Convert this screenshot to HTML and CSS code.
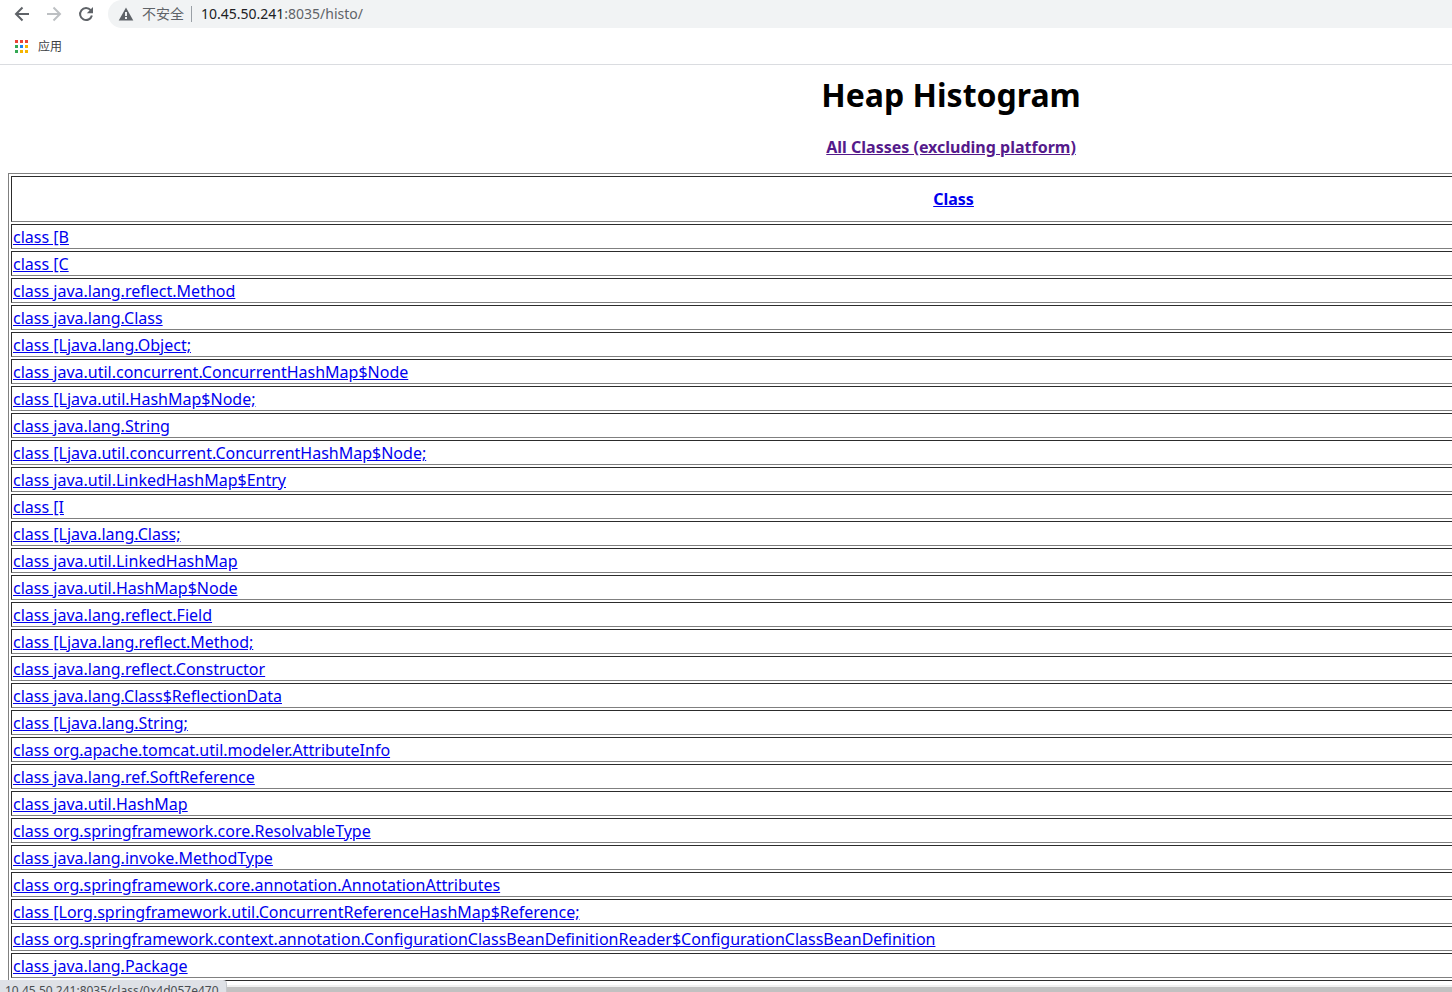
FILE: index.html
```html
<!DOCTYPE html>
<html lang="zh-CN">
<head>
  <meta charset="UTF-8">
  <title>Heap Histogram</title>
  <link rel="stylesheet" href="styles.css">
</head>
<body>

  <!-- Toolbar -->
  <header class="browser">
    <div class="toolbar">
      <button class="nav-btn" aria-label="Back">
        <svg width="16" height="16" viewBox="0 0 16 16"><path d="M15 8H2M8.500 1.500L2 8l6.500 6.500" fill="none" stroke="#5f6368" stroke-width="2"/></svg>
      </button>
      <button class="nav-btn" aria-label="Forward" disabled>
        <svg width="16" height="16" viewBox="0 0 16 16"><path d="M1 8h13M7.500 1.500L14 8l-6.500 6.500" fill="none" stroke="#bdc0c3" stroke-width="2"/></svg>
      </button>
      <button class="nav-btn" aria-label="Reload">
        <svg width="16" height="16" viewBox="0 0 16 16"><path d="M12.700 4.200A6 6 0 1 0 13.900 9.600" fill="none" stroke="#5f6368" stroke-width="2"/><path d="M15 1v6.200H8.800z" fill="#5f6368"/></svg>
      </button>
      <div class="address">
        <svg width="16" height="14" viewBox="0 0 16 14"><path d="M8 0.500L15.300 13.500H0.700z" fill="#5f6368"/><path d="M7 5h2v4H7zM7 10h2v2H7z" fill="#f1f3f4"/></svg>
        <span class="insecure">不安全</span>
        <span class="url"><b>10.45.50.241</b>:8035/histo/</span>
      </div>
    </div>
    <nav class="bookmarks">
      <a href="#">
        <svg width="13" height="13" viewBox="0 0 13 13">
          <path d="M0 0h3v3H0zM5 0h3v3H5zM10 0h3v3h-3z" fill="#ea4335"/>
          <path d="M0 5h3v3H0zM0 10h3v3H0z" fill="#34a853"/>
          <path d="M5 5h3v3H5z" fill="#1a84f0"/>
          <path d="M10 5h3v3h-3zM5 10h3v3H5zM10 10h3v3h-3z" fill="#f5b400"/>
        </svg>
        <span>应用</span>
      </a>
    </nav>
  </header>

  <!-- Page -->
  <main class="viewport">
    <div class="page">
      <h1>Heap Histogram</h1>
      <p class="filter"><a class="visited" href="#">All Classes (excluding platform)</a></p>
      <table>
        <thead>
          <tr><th><a href="#">Class</a></th></tr>
        </thead>
        <tbody>
          <tr><td><a href="#">class [B</a></td></tr>
          <tr><td><a href="#">class [C</a></td></tr>
          <tr><td><a href="#">class java.lang.reflect.Method</a></td></tr>
          <tr><td><a href="#">class java.lang.Class</a></td></tr>
          <tr><td><a href="#">class [Ljava.lang.Object;</a></td></tr>
          <tr><td><a href="#">class java.util.concurrent.ConcurrentHashMap$Node</a></td></tr>
          <tr><td><a href="#">class [Ljava.util.HashMap$Node;</a></td></tr>
          <tr><td><a href="#">class java.lang.String</a></td></tr>
          <tr><td><a href="#">class [Ljava.util.concurrent.ConcurrentHashMap$Node;</a></td></tr>
          <tr><td><a href="#">class java.util.LinkedHashMap$Entry</a></td></tr>
          <tr><td><a href="#">class [I</a></td></tr>
          <tr><td><a href="#">class [Ljava.lang.Class;</a></td></tr>
          <tr><td><a href="#">class java.util.LinkedHashMap</a></td></tr>
          <tr><td><a href="#">class java.util.HashMap$Node</a></td></tr>
          <tr><td><a href="#">class java.lang.reflect.Field</a></td></tr>
          <tr><td><a href="#">class [Ljava.lang.reflect.Method;</a></td></tr>
          <tr><td><a href="#">class java.lang.reflect.Constructor</a></td></tr>
          <tr><td><a href="#">class java.lang.Class$ReflectionData</a></td></tr>
          <tr><td><a href="#">class [Ljava.lang.String;</a></td></tr>
          <tr><td><a href="#">class org.apache.tomcat.util.modeler.AttributeInfo</a></td></tr>
          <tr><td><a href="#">class java.lang.ref.SoftReference</a></td></tr>
          <tr><td><a href="#">class java.util.HashMap</a></td></tr>
          <tr><td><a href="#">class org.springframework.core.ResolvableType</a></td></tr>
          <tr><td><a href="#">class java.lang.invoke.MethodType</a></td></tr>
          <tr><td><a href="#">class org.springframework.core.annotation.AnnotationAttributes</a></td></tr>
          <tr><td><a href="#">class [Lorg.springframework.util.ConcurrentReferenceHashMap$Reference;</a></td></tr>
          <tr><td><a href="#">class org.springframework.context.annotation.ConfigurationClassBeanDefinitionReader$ConfigurationClassBeanDefinition</a></td></tr>
          <tr><td><a href="#">class java.lang.Package</a></td></tr>
          <tr><td></td></tr>
        </tbody>
      </table>
    </div>
  </main>

  <div class="scrollbar"></div>
  <div class="status">10.45.50.241:8035/class/0x4d057e470</div>

</body>
</html>
```
FILE: styles.css
```css
* {
  box-sizing: border-box;
}

body {
  margin: 0;
  height: 100vh;
  display: flex;
  flex-direction: column;
  overflow: hidden;
  position: relative;
  background: white;
  font-family: "Noto Sans", "Noto Sans CJK SC", sans-serif;
  font-size: 16px;
}

/* browser bar */
.browser {
  flex: none;
  border-bottom: 1px solid #dadce0;
}

.toolbar {
  display: flex;
  align-items: center;
  height: 28px;
  padding-left: 14px;
  gap: 16px;
}

.nav-btn {
  display: flex;
  padding: 0;
  border: none;
  background: none;
}

.address {
  flex: 1;
  display: flex;
  align-items: center;
  height: 28px;
  margin-left: -2px;
  padding-left: 10px;
  background: #f1f3f4;
  border-radius: 14px 0 0 14px;
  font-size: 14px;
  line-height: 16px;
  color: #5f6368;
}

.insecure {
  margin-left: 8px;
  padding-right: 7px;
  border-right: 1px solid #9aa0a6;
}

.url {
  margin-left: 9px;
}

.url b {
  font-weight: normal;
  color: #202124;
}

.bookmarks {
  display: flex;
  align-items: center;
  height: 36px;
  padding-left: 15px;
}

.bookmarks a {
  display: flex;
  align-items: center;
  gap: 10px;
  font-size: 12px;
  color: #3c4043;
  text-decoration: none;
}

/* page is wider than the window */
.viewport {
  flex: 1;
  min-height: 0;
  overflow: hidden;
}

.page {
  width: 131%;
  padding: 8px;
}

h1 {
  margin: 0;
  font-size: 32px;
  line-height: 44px;
  text-align: center;
}

.filter {
  margin: 19px 0 15px;
  line-height: 22px;
  font-weight: bold;
  text-align: center;
}

a {
  color: #0000ee;
}

a.visited {
  color: #551a8b;
}

table {
  width: calc(100% + 5px);
  border: 1px solid #808080;
  border-spacing: 2px;
}

th, td {
  height: 25px;
  padding: 2px 1px 0;
  border: 1px solid;
  border-color: #2c2c2c #808080 #808080 #2c2c2c;
  line-height: 21px;
  white-space: nowrap;
}

th {
  height: 46px;
  padding: 1px;
}

/* bottom edge of the window */
.scrollbar {
  flex: none;
  height: 7px;
  background: #c1c1c1;
  border-top: 2px solid #f1f1f1;
}

.status {
  position: absolute;
  left: 0;
  bottom: 0;
  height: 12px;
  padding: 0 7px 0 5px;
  overflow: hidden;
  background: #dee1e6;
  border-right: 1px solid #c4c7cb;
  border-top-right-radius: 4px;
  font-size: 12px;
  line-height: 22px;
  color: #4a4d51;
}
```
